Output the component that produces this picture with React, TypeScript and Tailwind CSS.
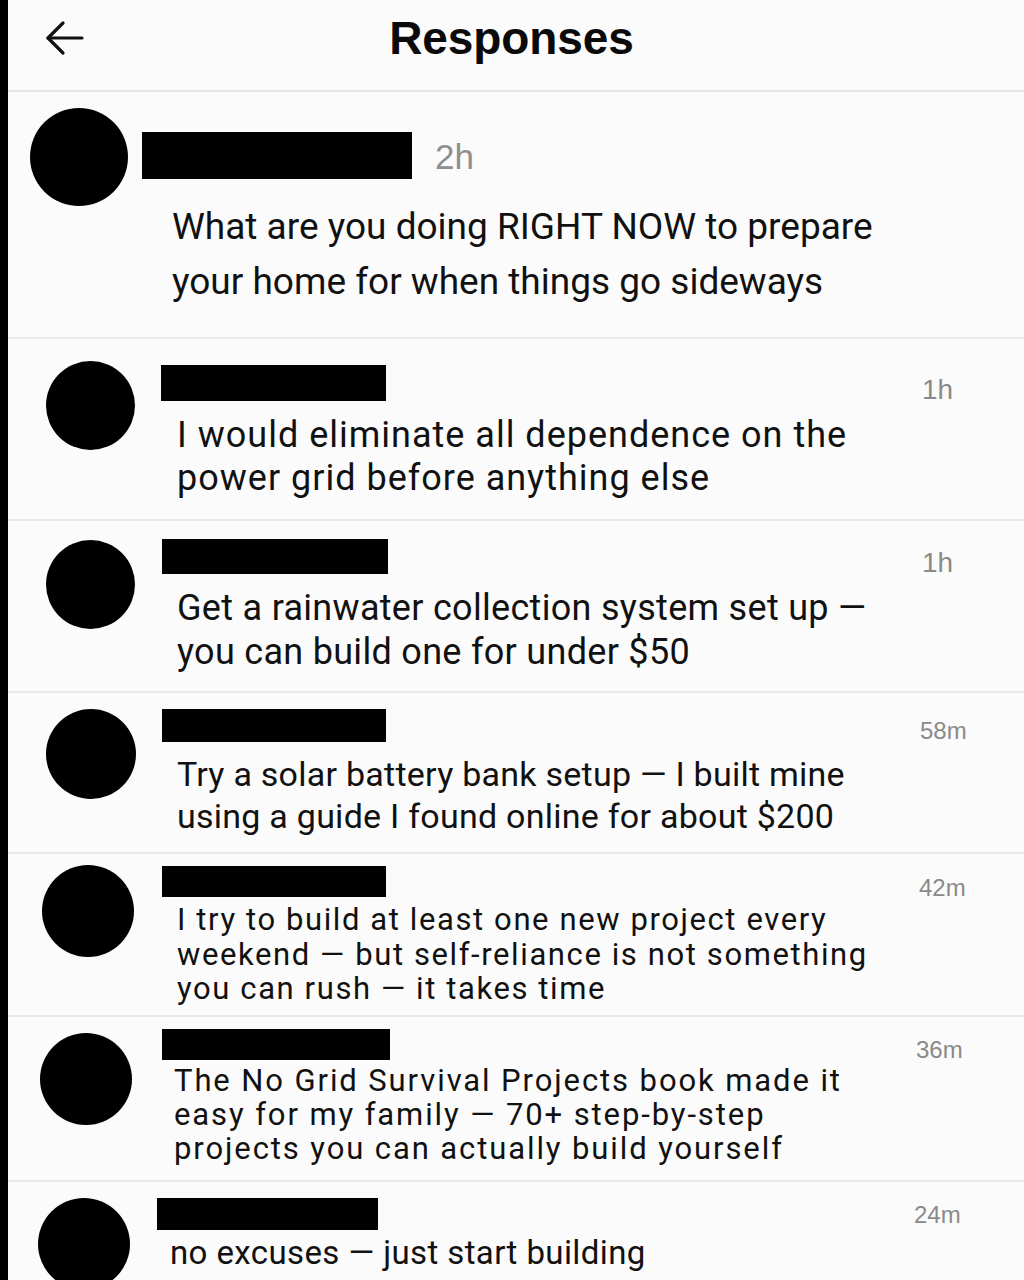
import React from 'react';

type Item = {
  h: string;
  avatar: string;
  nameRow: string;
  bar: string;
  time: string;
  body: string;
  label: string;
  lines: string[];
  last?: boolean;
};

const items: Item[] = [
  {
    h: 'h-[247px]',
    avatar: 'ml-[22px] mt-[16px] w-[98px] h-[98px]',
    nameRow: 'ml-[14px] mt-[40px] h-[47px]',
    bar: 'w-[270px] h-[47px]',
    time: 'ml-[23px] mt-[7px] text-[35px] text-[#8e8e8e]',
    body: 'ml-[44px] mt-[20px] text-[37px] leading-[55px]',
    label: '2h',
    lines: ['What are you doing RIGHT NOW to prepare', 'your home for when things go sideways'],
  },
  {
    h: 'h-[182px]',
    avatar: 'ml-[38px] mt-[22px] w-[89px] h-[89px]',
    nameRow: 'ml-[26px] mt-[26px] h-[36px]',
    bar: 'w-[225px] h-[36px]',
    time: 'ml-[536px] mt-[11px] text-[28px]',
    body: 'ml-[42px] mt-[13px] text-[36px] leading-[43px] tracking-[1px]',
    label: '1h',
    lines: ['I would eliminate all dependence on the', 'power grid before anything else'],
  },
  {
    h: 'h-[172px]',
    avatar: 'ml-[38px] mt-[19px] w-[89px] h-[89px]',
    nameRow: 'ml-[27px] mt-[18px] h-[35px]',
    bar: 'w-[226px] h-[35px]',
    time: 'ml-[534px] mt-[10px] text-[28px]',
    body: 'ml-[42px] mt-[12px] text-[36px] leading-[44px] tracking-[0.3px]',
    label: '1h',
    lines: ['Get a rainwater collection system set up \u2014', 'you can build one for under $50'],
  },
  {
    h: 'h-[161px]',
    avatar: 'ml-[38px] mt-[16px] w-[90px] h-[90px]',
    nameRow: 'ml-[26px] mt-[16px] h-[33px]',
    bar: 'w-[224px] h-[33px]',
    time: 'ml-[534px] mt-[10px] text-[24px]',
    body: 'ml-[41px] mt-[11px] text-[34px] leading-[42px] tracking-[0.25px]',
    label: '58m',
    lines: ['Try a solar battery bank setup \u2014 I built mine', 'using a guide I found online for about $200'],
  },
  {
    h: 'h-[163px]',
    avatar: 'ml-[34px] mt-[11px] w-[92px] h-[92px]',
    nameRow: 'ml-[28px] mt-[12px] h-[31px]',
    bar: 'w-[224px] h-[31px]',
    time: 'ml-[533px] mt-[10px] text-[24px]',
    body: 'ml-[43px] mt-[6px] text-[31px] leading-[34.5px] tracking-[1.6px]',
    label: '42m',
    lines: [
      'I try to build at least one new project every',
      'weekend \u2014 but self-reliance is not something',
      'you can rush \u2014 it takes time',
    ],
  },
  {
    h: 'h-[165px]',
    avatar: 'ml-[32px] mt-[16px] w-[92px] h-[92px]',
    nameRow: 'ml-[30px] mt-[12px] h-[31px]',
    bar: 'w-[228px] h-[31px]',
    time: 'ml-[526px] mt-[9px] text-[24px]',
    body: 'ml-[42px] mt-[4px] text-[31px] leading-[34px] tracking-[1.9px]',
    label: '36m',
    lines: [
      'The No Grid Survival Projects book made it',
      'easy for my family \u2014 70+ step-by-step',
      'projects you can actually build yourself',
    ],
  },
  {
    h: 'h-[98px]',
    avatar: 'ml-[30px] mt-[16px] w-[92px] h-[92px]',
    nameRow: 'ml-[27px] mt-[16px] h-[32px]',
    bar: 'w-[221px] h-[32px]',
    time: 'ml-[536px] mt-[5px] text-[24px]',
    body: 'ml-[40px] mt-[3px] text-[33px] leading-[40px] tracking-[0.4px]',
    label: '24m',
    lines: ['no excuses \u2014 just start building'],
    last: true,
  },
];

function BackArrow() {
  return (
    <svg width="40" height="40" viewBox="0 0 40 40" fill="none" stroke="#111" strokeWidth="3.2" strokeLinecap="round" strokeLinejoin="round">
      <path d="M37 19H3" />
      <path d="M18 4L3 19l15 15" />
    </svg>
  );
}

export default function App() {
  return (
    <div className="w-[1024px] h-[1280px] overflow-hidden bg-black flex font-['Roboto',sans-serif] text-[#111]">
      <div className="w-[8px] shrink-0" />
      <div className="flex-1 bg-[#fbfbfb] flex flex-col">
        {/* header */}
        <div className="h-[92px] shrink-0 flex items-center border-b-2 border-[#e6e6e6]">
          <div className="ml-[37px] mb-[12px]">
            <BackArrow />
          </div>
          <div className="flex-1 text-center pr-[86px] mb-[14px] font-['Liberation_Sans',sans-serif] font-bold text-[46px] tracking-[-0.1px] text-[#0a0a0a]">
            Responses
          </div>
        </div>

        {items.map((r, i) => (
          <div
            key={i}
            className={`${r.h} shrink-0 flex items-start ${r.last ? '' : 'border-b-2 border-[#e8e8e8]'}`}
          >
            <div className={`${r.avatar} shrink-0 rounded-full bg-black`} />
            <div className="flex flex-col">
              <div className={`${r.nameRow} flex items-start`}>
                <div className={`${r.bar} bg-black shrink-0`} />
                <div className={`${r.time} leading-none text-[#8a8a8a] font-['Liberation_Sans',sans-serif]`}>
                  {r.label}
                </div>
              </div>
              <div className={`${r.body} whitespace-nowrap`}>
                {r.lines.map((l, j) => (
                  <div key={j}>{l}</div>
                ))}
              </div>
            </div>
          </div>
        ))}
      </div>
    </div>
  );
}
